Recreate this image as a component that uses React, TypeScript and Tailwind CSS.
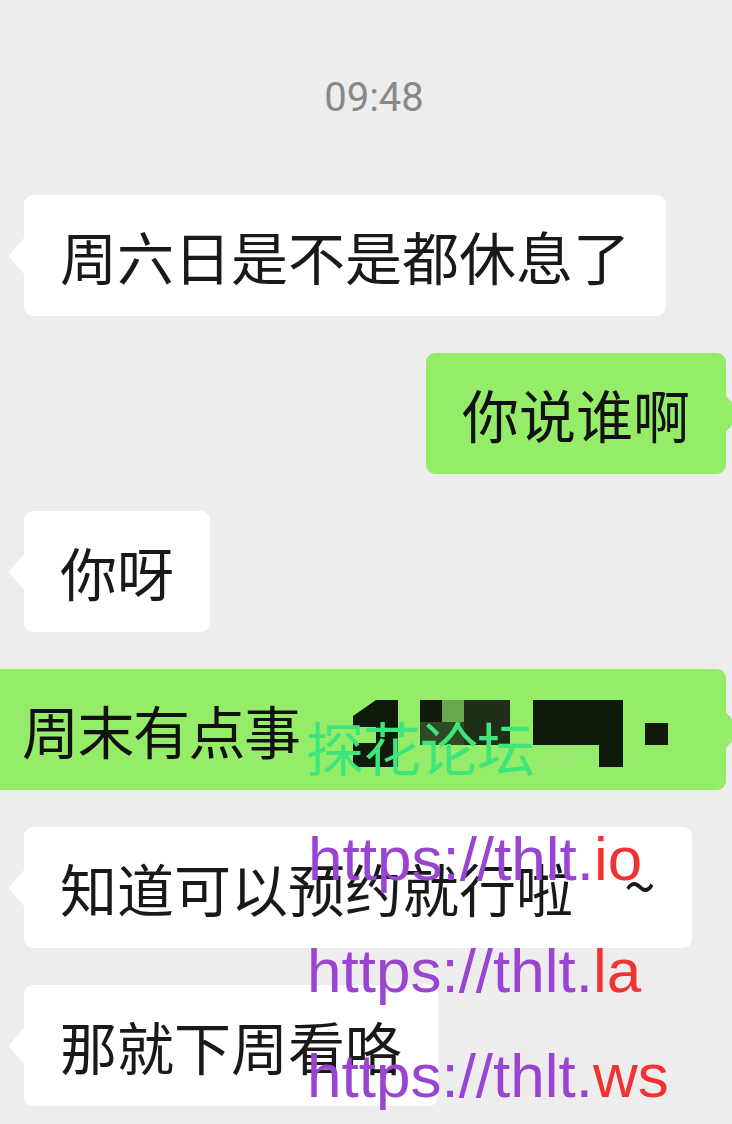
import React from "react";

const cjk = "font-['Noto_Sans_CJK_SC','Noto_Sans',sans-serif]";

function LeftTail() {
  return (
    <svg
      className="absolute left-[-16px] top-1/2 -translate-y-1/2"
      width="16"
      height="36"
      viewBox="0 0 16 36"
    >
      <path d="M16 0 L2.5 15.5 Q0.5 18 2.5 20.5 L16 36 Z" fill="#ffffff" />
    </svg>
  );
}

function RightTail() {
  return (
    <svg
      className="absolute right-[-16px] top-1/2 -translate-y-1/2"
      width="16"
      height="36"
      viewBox="0 0 16 36"
    >
      <path d="M0 0 L13.5 15.5 Q15.5 18 13.5 20.5 L0 36 Z" fill="#95ec69" />
    </svg>
  );
}

function LeftBubble({ children }: { children: React.ReactNode }) {
  return (
    <div className="flex justify-start pl-[24px]">
      <div className="relative bg-white rounded-[9px] px-[36px] py-[21px] text-[57px] leading-[79px] text-[#191919] whitespace-pre">
        {children}
        <LeftTail />
      </div>
    </div>
  );
}

function RightBubble({ text }: { text: string }) {
  return (
    <div className="flex justify-end pr-[6px]">
      <div className="relative bg-[#95ec69] rounded-[9px] px-[36px] py-[21px] text-[57px] leading-[79px] text-[#111111] whitespace-pre">
        {text}
        <RightTail />
      </div>
    </div>
  );
}

function Mosaic() {
  const dark = "#0f1a0b";
  return (
    <svg className="absolute left-0 top-0" width="726" height="121" viewBox="0 0 726 121">
      <polygon points="353,47 376,31 376,58 353,58" fill={dark} />
      <rect x="376" y="31" width="22" height="67" fill={dark} />
      <rect x="353" y="74" width="23" height="24" fill={dark} />
      <rect x="420" y="31" width="22" height="22" fill={dark} />
      <rect x="442" y="31" width="22" height="22" fill="#6aa84f" />
      <rect x="464" y="31" width="46" height="22" fill="#1f2e18" />
      <rect x="420" y="53" width="44" height="23" fill="#2e4a24" />
      <rect x="464" y="53" width="46" height="23" fill="#1f2e18" />
      <rect x="533" y="31" width="90" height="45" fill={dark} />
      <rect x="599" y="76" width="24" height="22" fill={dark} />
      <rect x="645" y="54" width="23" height="22" fill={dark} />
      <rect x="556" y="76" width="22" height="22" fill="#99e870" />
    </svg>
  );
}

const url = "font-['Liberation_Sans',Arial,sans-serif] text-[62px] leading-none whitespace-nowrap text-[#9a44d2]";

export default function App() {
  return (
    <div className={`relative w-[732px] h-[1124px] overflow-hidden bg-[#ededed] ${cjk}`}>
      <div className="flex flex-col pt-[78px]">
        <div className="h-[40px] pl-[16px] text-center font-['Roboto',sans-serif] text-[40px] leading-[40px] text-[#888888]">
          09:48
        </div>
        <div className="mt-[77px] flex flex-col gap-[37px]">
          <LeftBubble>周六日是不是都休息了</LeftBubble>
          <RightBubble text="你说谁啊" />
          <LeftBubble>你呀</LeftBubble>
          <div className="pr-[6px]">
            <div className="relative h-[121px] bg-[#95ec69] rounded-r-[9px] pl-[22px] py-[21px] text-[57px] leading-[79px] text-[#111111]">
              <span className="tracking-[-1.5px]">周末有点事</span>
              <Mosaic />
              <RightTail />
            </div>
          </div>
          <LeftBubble>
            知道可以预约就行啦<span className="tracking-[-6px]">　</span>
            <span className="relative top-[-4px]">~</span>
          </LeftBubble>
          <LeftBubble>那就下周看咯</LeftBubble>
        </div>
      </div>

      {/* watermark overlay */}
      <div className="absolute left-[306px] top-[717px] text-[58px] leading-[58px] text-[#3de57c] whitespace-nowrap tracking-[-1px]">
        探花论坛
      </div>
      <div className={`absolute left-[308px] top-[828px] ${url}`}>
        https://thlt.<span className="text-[#f03232]">io</span>
      </div>
      <div className={`absolute left-[307px] top-[940px] ${url}`}>
        https://thlt.<span className="text-[#f03232]">la</span>
      </div>
      <div className={`absolute left-[307px] top-[1045px] ${url}`}>
        https://thlt.<span className="text-[#f03232]">ws</span>
      </div>
    </div>
  );
}
